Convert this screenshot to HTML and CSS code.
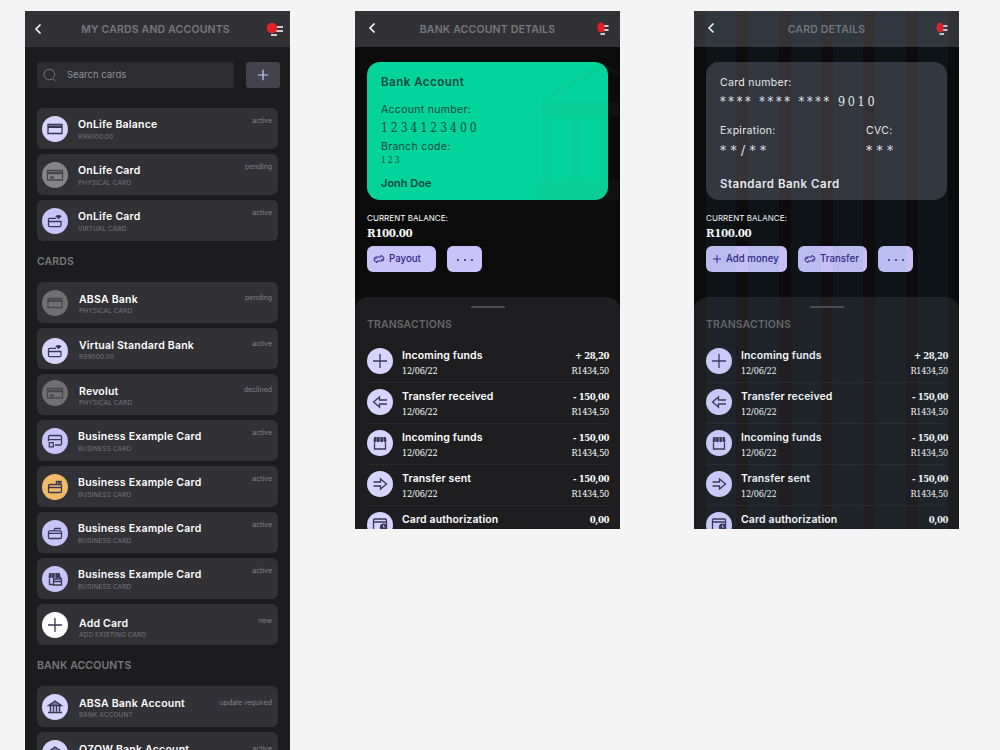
FILE: index.html
```html
<!DOCTYPE html>
<html lang="en">

<head>
  <meta charset="UTF-8">
  <meta name="viewport" content="width=device-width, initial-scale=1.0">
  <title>Cards and accounts</title>
  <link rel="stylesheet" href="styles.css">
</head>

<body>
  <!-- shared icons -->
  <svg class="defs" width="0" height="0">
    <symbol id="back" viewBox="0 0 8 12"><path d="M6.500 1.500 2 6l4.500 4.500" fill="none" stroke="#fff" stroke-width="1.600"/></symbol>
    <symbol id="plus" viewBox="0 0 26 26"><path d="M13 6v14M6 13h14"/></symbol>
    <symbol id="card" viewBox="0 0 26 26"><path d="M6 8.500h14v9H6z"/><path d="M6 10.800h14" stroke-width="2.400"/></symbol>
    <symbol id="card-chip" viewBox="0 0 26 26"><path d="M5.500 8.500h15v9.500h-15z"/><path d="M5.500 11h15" stroke-width="2.400"/><path d="M8 15.500h4" stroke-width="1.800"/></symbol>
    <symbol id="card-wifi" viewBox="0 0 26 26"><path d="M14 10.300H7.500Q6.500 10.300 6.500 11.300v6q0 1.300 1.300 1.300h9.900q1.300 0 1.300-1.300v-3.800H6.500"/><path d="M13.300 8.300Q16.500 5.800 19.700 8.300L16.500 11.300z" fill="#3a3754" stroke="none"/></symbol>
    <symbol id="card-shop" viewBox="0 0 26 26"><path d="M6.500 13V8.800q0-1.300 1.300-1.300h10.400q1.300 0 1.300 1.300v6.900q0 1.300-1.300 1.300H13M6.500 11.700h13"/><path d="M7.300 15.500v3.300h4v-3.300M6.500 14.700h5.600"/></symbol>
    <symbol id="card-box" viewBox="0 0 26 26"><rect x="6.500" y="10.500" width="13" height="8" rx="1.300"/><path d="M6.500 13.500h13M14.500 10.500V7.500h4.500v3M16 9h2"/></symbol>
    <symbol id="card-line" viewBox="0 0 26 26"><rect x="6.500" y="10.800" width="13" height="7.700" rx="1.300"/><path d="M6.500 13.300h13M12 10.500q0-2 1.500-2H19"/></symbol>
    <symbol id="shop" viewBox="0 0 26 26"><path d="M7.500 12.500v6.500h11v-6.500"/><path d="M7.200 7h2.500v4.500q-1.700 1.500-3.200 0zM10.300 7h2.400v4.500q-1.200 1.500-2.800 0zM13.300 7h2.400l.4 4.500q-1.600 1.500-2.800 0zM16.300 7h2.500l.7 4.500q-1.700 1.500-2.900 0z" fill="#3a3754" stroke="none"/></symbol>
    <symbol id="shop-card" viewBox="0 0 26 26"><path d="M7.500 12.500v6h4"/><path d="M7.200 7h2.500v4.500q-1.700 1.500-3.200 0zM10.300 7h2.400v4.500q-1.200 1.500-2.800 0zM13.300 7h2.400l.4 4.500q-1.600 1.500-2.800 0zM15.800 7h2l.7 4.500q-1.200 1.500-2.400 0z" fill="#3a3754" stroke="none"/><path d="M11.500 13h8v6h-8zM11.500 15.500h8M18.500 11v2"/></symbol>
    <symbol id="bank" viewBox="0 0 26 26"><path d="M6.500 11.500 13 7l6.500 4.500z" fill="#77739a"/><path d="M8.500 12v5.500M11.500 12v5.500M14.500 12v5.500M17.500 12v5.500M6 18.500h14" stroke-width="1.500"/></symbol>
    <symbol id="arrow-in" viewBox="0 0 26 26"><path d="M20 11h-7.500V8L6.500 13l6 5v-3H20"/></symbol>
    <symbol id="arrow-out" viewBox="0 0 26 26"><path d="M6.500 11H13.500V8l6 5-6 5v-3H6.500"/></symbol>
    <symbol id="clock-card" viewBox="0 0 26 26"><rect x="6.500" y="7" width="13" height="12" rx="1"/><path d="M6.500 10h13"/><circle cx="16.500" cy="15" r="3.600" fill="#3a3754" stroke="none"/><path d="M16.500 13v2.200H18" stroke="#d7d4ff" stroke-width=".8"/></symbol>
    <symbol id="swap" viewBox="0 0 12 10"><path d="M1 5Q1 3 3 3h5V1.200l3.200 2.600L8 6.200M11 5Q11 7 9 7H4v1.800L.8 6.200 4 3.800"/></symbol>
  </svg>

  <main class="board">
    <section class="phone list">
      <header class="bar">
        <svg class="back"><use href="#back"/></svg>
        <h1>MY CARDS AND ACCOUNTS</h1>
        <svg class="menu wide" viewBox="0 0 18 14"><path d="M10 5h8M10 9h8M6 13h6" stroke="#fff" stroke-width="1.300"/><circle cx="7" cy="6" r="5.300" fill="#e61e28"/></svg>
      </header>

      <div class="search-row">
        <div class="search">
          <svg width="14" height="14" viewBox="0 0 14 14" fill="none" stroke="#77777d"><circle cx="6.300" cy="6.500" r="5.300"/><path d="m10 10.500 3 3"/></svg>
          <span>Search cards</span>
        </div>
        <button class="add"><svg width="12" height="12" viewBox="0 0 12 12"><path d="M6 .8v10.400M.8 6h10.400" stroke="#cfcbff" stroke-width="1.200"/></svg></button>
      </div>

      <div class="cards">
        <article class="item">
          <svg class="icon"><use href="#card"/></svg>
          <div class="text"><h3>OnLife Balance</h3><p>R99000.00</p></div>
          <span class="status">active</span>
        </article>
        <article class="item">
          <svg class="icon gray"><use href="#card-chip"/></svg>
          <div class="text"><h3>OnLife Card</h3><p>PHYSICAL CARD</p></div>
          <span class="status">pending</span>
        </article>
        <article class="item">
          <svg class="icon violet"><use href="#card-wifi"/></svg>
          <div class="text"><h3>OnLife Card</h3><p>VIRTUAL CARD</p></div>
          <span class="status">active</span>
        </article>
      </div>

      <h2>CARDS</h2>
      <div class="cards">
        <article class="item low">
          <svg class="icon dim"><use href="#card"/></svg>
          <div class="text"><h3>ABSA Bank</h3><p>PHYSICAL CARD</p></div>
          <span class="status">pending</span>
        </article>
        <article class="item low drop">
          <svg class="icon"><use href="#card-wifi"/></svg>
          <div class="text"><h3>Virtual Standard Bank</h3><p>R99000.00</p></div>
          <span class="status">active</span>
        </article>
        <article class="item low lift">
          <svg class="icon dim"><use href="#card-chip"/></svg>
          <div class="text"><h3>Revolut</h3><p>PHYSICAL CARD</p></div>
          <span class="status">declined</span>
        </article>
        <article class="item">
          <svg class="icon violet"><use href="#card-shop"/></svg>
          <div class="text"><h3>Business Example Card</h3><p>BUSINESS CARD</p></div>
          <span class="status">active</span>
        </article>
        <article class="item">
          <svg class="icon orange"><use href="#card-box"/></svg>
          <div class="text"><h3>Business Example Card</h3><p>BUSINESS CARD</p></div>
          <span class="status">active</span>
        </article>
        <article class="item">
          <svg class="icon violet"><use href="#card-line"/></svg>
          <div class="text"><h3>Business Example Card</h3><p>BUSINESS CARD</p></div>
          <span class="status">active</span>
        </article>
        <article class="item">
          <svg class="icon violet"><use href="#shop-card"/></svg>
          <div class="text"><h3>Business Example Card</h3><p>BUSINESS CARD</p></div>
          <span class="status">active</span>
        </article>
        <article class="item low new">
          <svg class="icon white"><use href="#plus"/></svg>
          <div class="text"><h3>Add Card</h3><p>ADD EXISTING CARD</p></div>
          <span class="status">new</span>
        </article>
      </div>

      <h2>BANK ACCOUNTS</h2>
      <div class="cards">
        <article class="item low account">
          <svg class="icon"><use href="#bank"/></svg>
          <div class="text"><h3>ABSA Bank Account</h3><p>BANK ACCOUNT</p></div>
          <span class="status">update required</span>
        </article>
        <article class="item low account">
          <svg class="icon"><use href="#bank"/></svg>
          <div class="text"><h3>OZOW Bank Account</h3></div>
          <span class="status">active</span>
        </article>
      </div>
    </section>

    <section class="phone details">
      <header class="bar">
        <svg class="back"><use href="#back"/></svg>
        <h1>BANK ACCOUNT DETAILS</h1>
        <svg class="menu" viewBox="0 0 12 14"><path d="M6 4h5.500M6 8h5.500M3.500 12h4.500" stroke="#fff" stroke-width="1.300"/><ellipse cx="4" cy="5.500" rx="3.700" ry="5" fill="#e61e28"/></svg>
      </header>

      <div class="bank-card">
        <svg class="watermark" width="86" height="140" viewBox="0 0 86 140">
          <path d="M8 36 70 1l16 8v6L70 7 12 39zM8 40h78v15H76v63h10v20H2l4-20h4V55l-2-3zM18 55v63h21V55zM47 55v63h21V55z" fill-rule="evenodd"/>
        </svg>
        <h3 class="name">Bank Account</h3>
        <p class="label">Account number:</p>
        <p class="number">1234123400</p>
        <p class="label branch">Branch code:</p>
        <p class="code">123</p>
        <h3 class="owner">Jonh Doe</h3>
      </div>

      <div class="balance"><p>CURRENT BALANCE:</p><strong>R100.00</strong></div>
      <div class="actions">
        <button class="w69"><svg width="12" height="10"><use href="#swap"/></svg><span>Payout</span></button>
        <button class="more"><i></i><i></i><i></i></button>
      </div>

      <div class="sheet">
        <div class="handle"></div>
        <h2>TRANSACTIONS</h2>
        <div class="row"><svg class="icon"><use href="#plus"/></svg><div class="what"><h4>Incoming funds</h4><p>12/06/22</p></div><div class="sum"><b>+ 28,20</b><p>R1434,50</p></div></div>
        <div class="row"><svg class="icon"><use href="#arrow-in"/></svg><div class="what"><h4>Transfer received</h4><p>12/06/22</p></div><div class="sum"><b>- 150,00</b><p>R1434,50</p></div></div>
        <div class="row"><svg class="icon"><use href="#shop"/></svg><div class="what"><h4>Incoming funds</h4><p>12/06/22</p></div><div class="sum"><b>- 150,00</b><p>R1434,50</p></div></div>
        <div class="row"><svg class="icon"><use href="#arrow-out"/></svg><div class="what"><h4>Transfer sent</h4><p>12/06/22</p></div><div class="sum"><b>- 150,00</b><p>R1434,50</p></div></div>
        <div class="row"><svg class="icon"><use href="#clock-card"/></svg><div class="what"><h4>Card authorization</h4></div><div class="sum"><b>0,00</b></div></div>
      </div>
    </section>

    <section class="phone details">
      <header class="bar">
        <svg class="back"><use href="#back"/></svg>
        <h1>CARD DETAILS</h1>
        <svg class="menu" viewBox="0 0 12 14"><path d="M6 4h5.500M6 8h5.500M3.500 12h4.500" stroke="#fff" stroke-width="1.300"/><ellipse cx="4" cy="5.500" rx="3.700" ry="5" fill="#e61e28"/></svg>
      </header>

      <div class="bank-card dark">
        <p class="label">Card number:</p>
        <p class="pan"><span>****</span><span>****</span><span>****</span><span class="last">9010</span></p>
        <div class="split">
          <div><p class="label">Expiration:</p><p class="stars">**/**</p></div>
          <div class="cvc"><p class="label">CVC:</p><p class="stars">***</p></div>
        </div>
        <h3 class="name owner">Standard Bank Card</h3>
      </div>

      <div class="balance"><p>CURRENT BALANCE:</p><strong>R100.00</strong></div>
      <div class="actions">
        <button class="w80"><svg width="10" height="10" viewBox="0 0 10 10"><path d="M5 1v8M1 5h8"/></svg><span>Add money</span></button>
        <button class="w69"><svg width="12" height="10"><use href="#swap"/></svg><span>Transfer</span></button>
        <button class="more"><i></i><i></i><i></i></button>
      </div>

      <div class="sheet">
        <div class="handle"></div>
        <h2>TRANSACTIONS</h2>
        <div class="row"><svg class="icon"><use href="#plus"/></svg><div class="what"><h4>Incoming funds</h4><p>12/06/22</p></div><div class="sum"><b>+ 28,20</b><p>R1434,50</p></div></div>
        <div class="row"><svg class="icon"><use href="#arrow-in"/></svg><div class="what"><h4>Transfer received</h4><p>12/06/22</p></div><div class="sum"><b>- 150,00</b><p>R1434,50</p></div></div>
        <div class="row"><svg class="icon"><use href="#shop"/></svg><div class="what"><h4>Incoming funds</h4><p>12/06/22</p></div><div class="sum"><b>- 150,00</b><p>R1434,50</p></div></div>
        <div class="row"><svg class="icon"><use href="#arrow-out"/></svg><div class="what"><h4>Transfer sent</h4><p>12/06/22</p></div><div class="sum"><b>- 150,00</b><p>R1434,50</p></div></div>
        <div class="row"><svg class="icon"><use href="#clock-card"/></svg><div class="what"><h4>Card authorization</h4></div><div class="sum"><b>0,00</b></div></div>
      </div>

      <!-- six column layout grid -->
      <div class="columns"><i></i><i></i><i></i><i></i><i></i><i></i></div>
    </section>
  </main>
</body>

</html>
```
FILE: styles.css
```css
* {
  box-sizing: border-box;
}

body {
  margin: 0;
  height: 750px;
  overflow: hidden;
  background-color: #f4f4f4;
  font-family: Inter, "Open Sans", sans-serif;
  color: #fff;
}

h1, h2, h3, h4, p {
  margin: 0;
}

button {
  border: none;
  padding: 0;
  font-family: inherit;
}

.defs {
  position: absolute;
}

.board {
  display: flex;
  align-items: flex-start;
  padding: 11px 0 0 25px;
}

.phone {
  flex: none;
  width: 265px;
  overflow: hidden;
}

.list {
  height: 760px;
  margin-right: 65px;
  background-color: #1c1c1e;
}

.details {
  position: relative;
  height: 518px;
  margin-right: 74px;
  background-color: #0b0b0b;
}

/* header */

.bar {
  display: flex;
  align-items: center;
  height: 36px;
  padding: 0 7px 0 9px;
  background-color: #323236;
}

.bar h1 {
  flex: 1;
  padding-left: 4px;
  text-align: center;
  font-size: 10.5px;
  font-weight: 600;
  letter-spacing: .18px;
  color: #77777b;
}

.back {
  width: 8px;
  height: 12px;
}

.menu {
  width: 12px;
  height: 14px;
}

.menu.wide {
  width: 18px;
}

.details .bar {
  padding: 0 11px 0 13px;
}

.details .bar h1 {
  padding-left: 2px;
}

.details .back {
  margin-bottom: 2px;
}

.details .menu {
  margin-bottom: 1px;
}

/* list of cards */

.search-row {
  display: flex;
  justify-content: space-between;
  padding: 15px 10px 20px 12px;
}

.search {
  display: flex;
  align-items: center;
  gap: 10px;
  width: 197px;
  height: 26px;
  padding: 0 0 1px 6px;
  border-radius: 3px;
  background-color: #2d2d31;
  color: #909094;
  font-size: 9.5px;
}

.add {
  display: flex;
  align-items: center;
  justify-content: center;
  width: 34px;
  height: 26px;
  border-radius: 3px;
  background-color: #43424d;
}

.cards {
  display: flex;
  flex-direction: column;
  gap: 5px;
  padding: 0 12px;
}

.list h2 {
  height: 41px;
  padding-left: 12px;
  line-height: 42px;
  font-size: 10.5px;
  font-weight: 600;
  letter-spacing: .12px;
  color: #77777b;
}

.item {
  display: flex;
  align-items: center;
  height: 41px;
  padding: 0 6px 0 5px;
  border-radius: 6px;
  background-color: #323136;
}

.icon {
  flex: none;
  width: 26px;
  height: 26px;
  border-radius: 50%;
  background-color: #d7d4ff;
  fill: none;
  stroke: #3a3754;
  stroke-width: 1.3;
}

.violet { background-color: #c8c3f8; }
.orange { background-color: #f0bb68; }
.white { background-color: #fff; }

.gray {
  background-color: #858587;
  stroke: #47474b;
}

.dim {
  background-color: #707072;
  stroke: #48484c;
}

.text {
  flex: 1;
  align-self: flex-start;
  padding: 9px 0 0 10px;
}

.text h3 {
  line-height: 15px;
  font-size: 10.5px;
  font-weight: 600;
  letter-spacing: .22px;
  white-space: nowrap;
}

.text p {
  line-height: 10px;
  font-size: 6.5px;
  letter-spacing: .1px;
  color: #77777b;
}

.status {
  align-self: flex-start;
  padding-top: 8px;
  line-height: 10px;
  font-size: 7px;
  color: #828286;
}

.low .text { padding: 10px 0 0 11px; }
.low .text p { line-height: 8px; }
.low .status { padding-top: 11px; }
.drop .icon { margin-top: 4px; }
.lift .icon { margin-bottom: 3px; }
.new .text { padding-top: 12px; }
.new .status { padding-top: 12px; }
.account .status { padding-top: 12px; }

/* bank card */

.bank-card {
  position: relative;
  display: flex;
  flex-direction: column;
  width: 241px;
  height: 138px;
  margin: 15px 12px 0;
  padding: 12px 14px 0;
  border-radius: 13px;
  background-color: #03d49b;
  color: #0f4640;
}

.bank-card h3 {
  line-height: 16px;
  font-size: 11px;
  font-weight: 600;
}

.bank-card .name {
  font-size: 11.5px;
  letter-spacing: .5px;
}

.label {
  line-height: 14px;
  font-size: 10.5px;
  letter-spacing: .3px;
}

.bank-card h3 + .label {
  margin-top: 13px;
}

.number, .code, .pan, .stars, .balance strong, .sum, .what p {
  font-family: "DejaVu Serif Condensed", "DejaVu Serif", serif;
  font-stretch: condensed;
}

.number {
  line-height: 23px;
  font-size: 12px;
  letter-spacing: 3px;
}

.branch {
  line-height: 14px;
}

.code {
  line-height: 12px;
  font-size: 8.5px;
  letter-spacing: 2px;
}

.bank-card .owner {
  margin-top: 9px;
}

.watermark {
  position: absolute;
  left: 166px;
  top: 0;
  fill: #777;
  opacity: .055;
}

.dark {
  padding-top: 14px;
  background-color: #333238;
  color: #f2f2f2;
}

.pan {
  display: flex;
  gap: 6px;
  height: 24px;
  line-height: 24px;
  font-size: 12.5px;
  letter-spacing: 2.7px;
}

.split {
  display: flex;
  height: 40px;
  margin-top: 10px;
}

.split > div {
  width: 146px;
}

.split .cvc {
  width: auto;
}

.stars {
  line-height: 24px;
  font-size: 13.5px;
  letter-spacing: 4.4px;
}

.dark .owner {
  margin-top: 12px;
}

.balance {
  padding: 12px 12px 0;
}

.balance p {
  line-height: 12px;
  font-size: 8px;
  letter-spacing: .05px;
}

.balance strong {
  display: block;
  line-height: 19px;
  font-size: 11.5px;
  letter-spacing: -.4px;
}

.actions {
  display: flex;
  gap: 11px;
  padding: 3px 12px 0;
}

.actions button {
  display: flex;
  align-items: center;
  gap: 4px;
  height: 26px;
  padding-left: 6px;
  border-radius: 6px;
  background-color: #c8c3f8;
  color: #2f2688;
  font-size: 9.7px;
  font-weight: 500;
  white-space: nowrap;
}

.actions span {
  padding-bottom: 2px;
}

.actions svg {
  fill: none;
  stroke: #2f2688;
}

.w69 { width: 69px; }
.w80 { width: 81px; }

.actions .more {
  justify-content: center;
  gap: 5px;
  width: 35px;
  padding: 2px 0 0;
}

.more i {
  width: 2px;
  height: 2px;
  border-radius: 1px;
  background-color: #2f2688;
}

/* transactions */

.sheet {
  height: 240px;
  margin-top: 25px;
  padding: 9px 11px 0 12px;
  border-radius: 13px 13px 0 0;
  background-color: #1e1e20;
}

.handle {
  width: 34px;
  height: 2px;
  margin: 0 auto;
  border-radius: 1px;
  background-color: #4d4c58;
}

.sheet h2 {
  height: 34px;
  line-height: 34px;
  font-size: 10.5px;
  font-weight: 600;
  letter-spacing: .1px;
  color: #66666a;
}

.row {
  display: flex;
  align-items: center;
  height: 41px;
  padding-bottom: 2px;
  border-bottom: 1px solid #29292b;
}

.what {
  flex: 1;
  align-self: flex-start;
  padding: 6px 0 0 9px;
}

.row h4 {
  line-height: 15px;
  font-size: 10.5px;
  font-weight: 600;
  letter-spacing: .12px;
}

.row p {
  line-height: 16px;
  font-size: 9px;
  letter-spacing: -.25px;
}

.row .what p {
  letter-spacing: -.1px;
}

.sum {
  align-self: flex-start;
  padding-top: 6px;
  text-align: right;
}

.sum b {
  display: block;
  line-height: 15px;
  font-size: 9.5px;
  letter-spacing: -.4px;
}

/* grid overlay */

.columns {
  position: absolute;
  inset: 0 11px 0 12px;
  display: grid;
  grid-template-columns: repeat(6, 1fr);
  gap: 12px;
  background-color: rgba(150, 50, 60, .02);
  pointer-events: none;
}

.columns i {
  background-color: rgba(10, 130, 180, .07);
}
```
